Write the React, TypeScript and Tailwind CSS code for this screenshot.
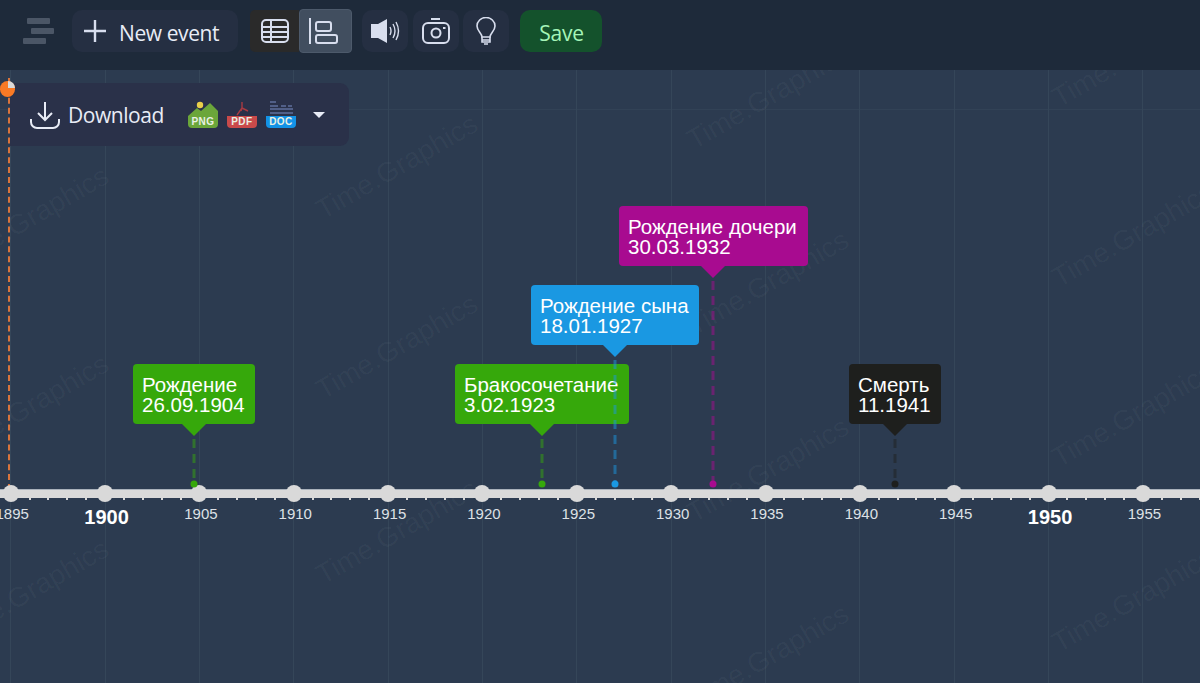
import React from 'react';

const YEARS = [1895, 1900, 1905, 1910, 1915, 1920, 1925, 1930, 1935, 1940, 1945, 1950, 1955];
const START = 10.7;
const STEP = 94.35;

const EVENTS = [
  { title: 'Рождение', date: '26.09.1904', left: 133, top: 294, width: 122, x: 194, color: '#36a80b' },
  { title: 'Бракосочетание', date: '3.02.1923', left: 455, top: 294, width: 174, x: 542, color: '#36a80b' },
  { title: 'Рождение сына', date: '18.01.1927', left: 531, top: 215, width: 168, x: 615, color: '#1a98e2' },
  { title: 'Рождение дочери', date: '30.03.1932', left: 619, top: 136, width: 189, x: 713, color: '#a80b90' },
  { title: 'Смерть', date: '11.1941', left: 849, top: 294, width: 92, x: 895, color: '#1e1f1d' },
];

// centre of each watermark, in page pixels
const MARKS = [
  [28, 219], [28, 407], [28, 592],
  [397, 167], [397, 347], [397, 532],
  [768, 97], [768, 283], [768, 470], [768, 657],
  [1133, 55], [1133, 235], [1133, 415], [1133, 600],
];

const IconButton = ({ children }: { children: React.ReactNode }) => (
  <button className="w-[46px] h-[42px] rounded-[10px] bg-[#252f42] flex items-center justify-center">{children}</button>
);

const Header = () => (
  <header className="h-[70px] bg-[#1e2a3a] flex items-center pl-[23px] pb-[8px] shrink-0 font-['Open_Sans',sans-serif]">
    <div className="w-[31px] flex flex-col gap-[4px]">
      <div className="w-[23px] h-[6px] ml-[4px] rounded-[1px] bg-[#4b5666]" />
      <div className="w-[23px] h-[6px] ml-[8px] rounded-[1px] bg-[#4b5666]" />
      <div className="w-[23px] h-[6px] rounded-[1px] bg-[#4b5666]" />
    </div>
    <button className="ml-[18px] w-[166px] h-[42px] rounded-[10px] bg-[#252f42] flex items-center text-[#e8ecf6] text-[21px] pl-[11px]">
      <svg width="24" height="24" viewBox="0 0 24 24" fill="none" stroke="#d8deee" strokeWidth="2.4">
        <path d="M12 1v22M1 12h22" />
      </svg>
      <span className="ml-[12px] pt-[5px] tracking-[-0.4px]">New event</span>
    </button>
    <div className="ml-[12px] flex items-center">
      <button className="w-[49px] h-[42px] rounded-l-[5px] bg-[#2a2a2a] flex items-center justify-center">
        <svg width="30" height="26" viewBox="0 0 30 26" fill="none" stroke="#d8deee" strokeWidth="2">
          <rect x="2" y="2" width="26" height="22" rx="4" />
          <path d="M2 9h26M2 14h26M2 19h26M11 2v22" />
        </svg>
      </button>
      <button className="w-[53px] h-[44px] rounded-[4px] bg-[#414e5f] border border-[#4d5a6b] flex items-center pl-[8px]">
        <svg width="30" height="30" viewBox="0 0 30 30" fill="none" stroke="#d8deee" strokeWidth="2">
          <path d="M2 2v26" />
          <rect x="8" y="6" width="15" height="9" rx="2" />
          <rect x="8" y="19" width="21" height="8" rx="2" />
        </svg>
      </button>
    </div>
    <div className="ml-[10px] flex gap-[4.5px]">
      <IconButton>
        <svg width="30" height="26" viewBox="0 0 30 26" fill="none">
          <path d="M1 6h7l9-5v24l-9-5H1z" fill="#d8deee" />
          <path d="M20 9q2 4 0 8M23 6q4 7 0 14M26 4q5 9 0 18" stroke="#d8deee" strokeWidth="1.4" />
        </svg>
      </IconButton>
      <IconButton>
        <svg width="30" height="28" viewBox="0 0 30 28" fill="none" stroke="#d8deee" strokeWidth="2">
          <path d="M10 2h9" />
          <rect x="2" y="6" width="26" height="20" rx="5" />
          <circle cx="15" cy="16" r="4.5" />
          <path d="M22 11h2.5" />
        </svg>
      </IconButton>
      <IconButton>
        <svg width="22" height="28" viewBox="0 0 22 28" fill="none" stroke="#d8deee" strokeWidth="1.6">
          <path d="M7 20c0-4-5-6-5-11a9 8.5 0 0 1 18 0c0 5-5 7-5 11z" />
          <path d="M7 20v5h8v-5M7 23h8M9 27h4" />
        </svg>
      </IconButton>
    </div>
    <button className="ml-[11px] w-[82px] h-[42px] rounded-[10px] bg-[#14522c] text-[#a5f5b8] text-[21px] pl-[1px] pt-[5px] tracking-[-0.2px]">Save</button>
  </header>
);

const FileIcon = ({ label, color, children }: { label: string; color: string; children: React.ReactNode }) => (
  <div className="relative w-[30px] h-[27px]">
    {children}
    <div
      className="absolute left-0 bottom-0 w-[30px] h-[12px] rounded-b-[4px] text-[10px] leading-[12px] tracking-[0.4px] text-center font-bold text-[#e9f0e4] font-['Liberation_Sans',sans-serif]"
      style={{ backgroundColor: color }}
    >
      {label}
    </div>
  </div>
);

const DownloadPanel = () => (
  <div className="absolute left-[10px] top-[13px] w-[339px] h-[63px] rounded-r-[9px] bg-[#2a3149] flex items-center pl-[20px] font-['Open_Sans',sans-serif] z-20">
    <svg width="30" height="28" viewBox="0 0 30 28" fill="none" stroke="#e8ecf6" strokeWidth="2">
      <path d="M15 1v18M8 12l7 7 7-7M1 18v3a6 6 0 0 0 6 6h16a6 6 0 0 0 6-6v-3" />
    </svg>
    <span className="ml-[8px] pt-[2px] text-[#e8ecf6] text-[21px] tracking-[-0.45px]">Download</span>
    <div className="ml-[24px] flex gap-[9px] items-end">
      <FileIcon label="PNG" color="#6ba63a">
        <svg className="absolute top-0 left-0" width="30" height="18" viewBox="0 0 30 18">
          <path d="M0 18v-3l9-8 4 3 9-8 8 8v8z" fill="#6ba63a" />
          <circle cx="12" cy="4" r="3.2" fill="#e9cf4a" />
        </svg>
      </FileIcon>
      <FileIcon label="PDF" color="#c94a4a">
        <svg className="absolute top-0 left-0" width="30" height="16" viewBox="0 0 30 16" fill="none" stroke="#a83a42" strokeWidth="1.4">
          <path d="M15 1v6l-5 7M15 7l6 3M15 7l-1 3" />
        </svg>
      </FileIcon>
      <FileIcon label="DOC" color="#1392e6">
        <svg className="absolute top-0 left-0" width="30" height="16" viewBox="0 0 30 16" fill="none" stroke="#5f6f9c" strokeWidth="1.6">
          <path d="M4 1h6M4 5h8m3 0h5m2 0h4M4 8h23M4 12h23" />
        </svg>
      </FileIcon>
    </div>
    <div className="ml-[17px] w-0 h-0 border-x-[6px] border-x-transparent border-t-[6px] border-t-[#e8ecf6]" />
  </div>
);

const Flag = ({ ev }: { ev: (typeof EVENTS)[number] }) => (
  <>
    <div
      className="absolute rounded-[4px] pl-[9px] pt-[11px] text-white text-[20.5px] leading-[20px] whitespace-nowrap h-[60px] font-['Liberation_Sans',sans-serif]"
      style={{ left: ev.left, top: ev.top, width: ev.width, backgroundColor: ev.color }}
    >
      <div>{ev.title}</div>
      <div>{ev.date}</div>
    </div>
    <svg className="absolute overflow-visible" style={{ left: ev.x, top: ev.top + 59 }} width="1" height="1">
      <path d="M-13 0H13L0 13z" fill={ev.color} />
      <path
        d={`M0 16V${414 - ev.top - 59}`}
        stroke={ev.color}
        strokeOpacity="0.5"
        strokeWidth="3"
        strokeDasharray="9 6"
      />
      <circle cx="0" cy={414 - ev.top - 59} r="3.5" fill={ev.color} />
    </svg>
  </>
);

const Axis = () => (
  <>
    <div className="absolute left-0 right-0 top-[419px] h-[9px] bg-[#d9d9d9] border-t border-[#a9b1bb]" />
    {Array.from({ length: 64 }, (_, i) => (
      <div
        key={i}
        className="absolute top-[427px] w-[2px] h-[3px] bg-[#d9d9d9]"
        style={{ left: START - 1 + (i * STEP) / 5 }}
      />
    ))}
    {YEARS.map((year, i) => {
      const x = START + i * STEP;
      const major = year % 50 === 0;
      return (
        <React.Fragment key={year}>
          <div className="absolute top-[415px] w-[16px] h-[17px] rounded-full bg-[#d9d9d9]" style={{ left: x - 8 }} />
          <div
            className={
              major
                ? "absolute top-[434px] w-[60px] text-center text-white font-bold text-[20px] leading-[26px] font-['Liberation_Sans',sans-serif]"
                : "absolute top-[434px] w-[60px] text-center text-[#dde1e6] text-[15px] leading-[20px] font-['Liberation_Sans',sans-serif]"
            }
            style={{ left: x - 28.5 }}
          >
            {year}
          </div>
        </React.Fragment>
      );
    })}
  </>
);

const Timeline = () => (
  <main className="relative flex-1 bg-[#2c3b50] overflow-hidden">
    <div className="absolute left-0 right-0 top-[39px] h-px bg-[#324256]" />
    {YEARS.map((year, i) => (
      <div key={year} className="absolute top-0 bottom-0 w-px bg-[#354659]" style={{ left: START + i * STEP - 0.5 }} />
    ))}
    {MARKS.map(([x, y]) => (
      <div
        key={`${x}-${y}`}
        className="absolute -rotate-[30deg] w-[200px] text-center text-[28px] leading-[32px] whitespace-nowrap text-white/[0.04] font-['Liberation_Sans',sans-serif]"
        style={{ left: x - 100, top: y - 86 }}
      >
        Time.Graphics
      </div>
    ))}
    <div className="absolute left-[8px] top-[8px] h-[412px] border-l-2 border-dashed border-[#d9743c]" />
    <DownloadPanel />
    <div className="absolute left-0 top-[11px] w-[15px] h-[16px] rounded-full bg-[#f97a25] z-30">
      <div className="absolute right-0 top-0 w-[7px] h-[7px] rounded-tr-full bg-[#d9d9d9]" />
    </div>
    <Axis />
    {EVENTS.map((ev) => (
      <Flag key={ev.title} ev={ev} />
    ))}
  </main>
);

export default function App() {
  return (
    <div className="w-[1200px] h-[683px] flex flex-col overflow-hidden">
      <Header />
      <Timeline />
    </div>
  );
}
